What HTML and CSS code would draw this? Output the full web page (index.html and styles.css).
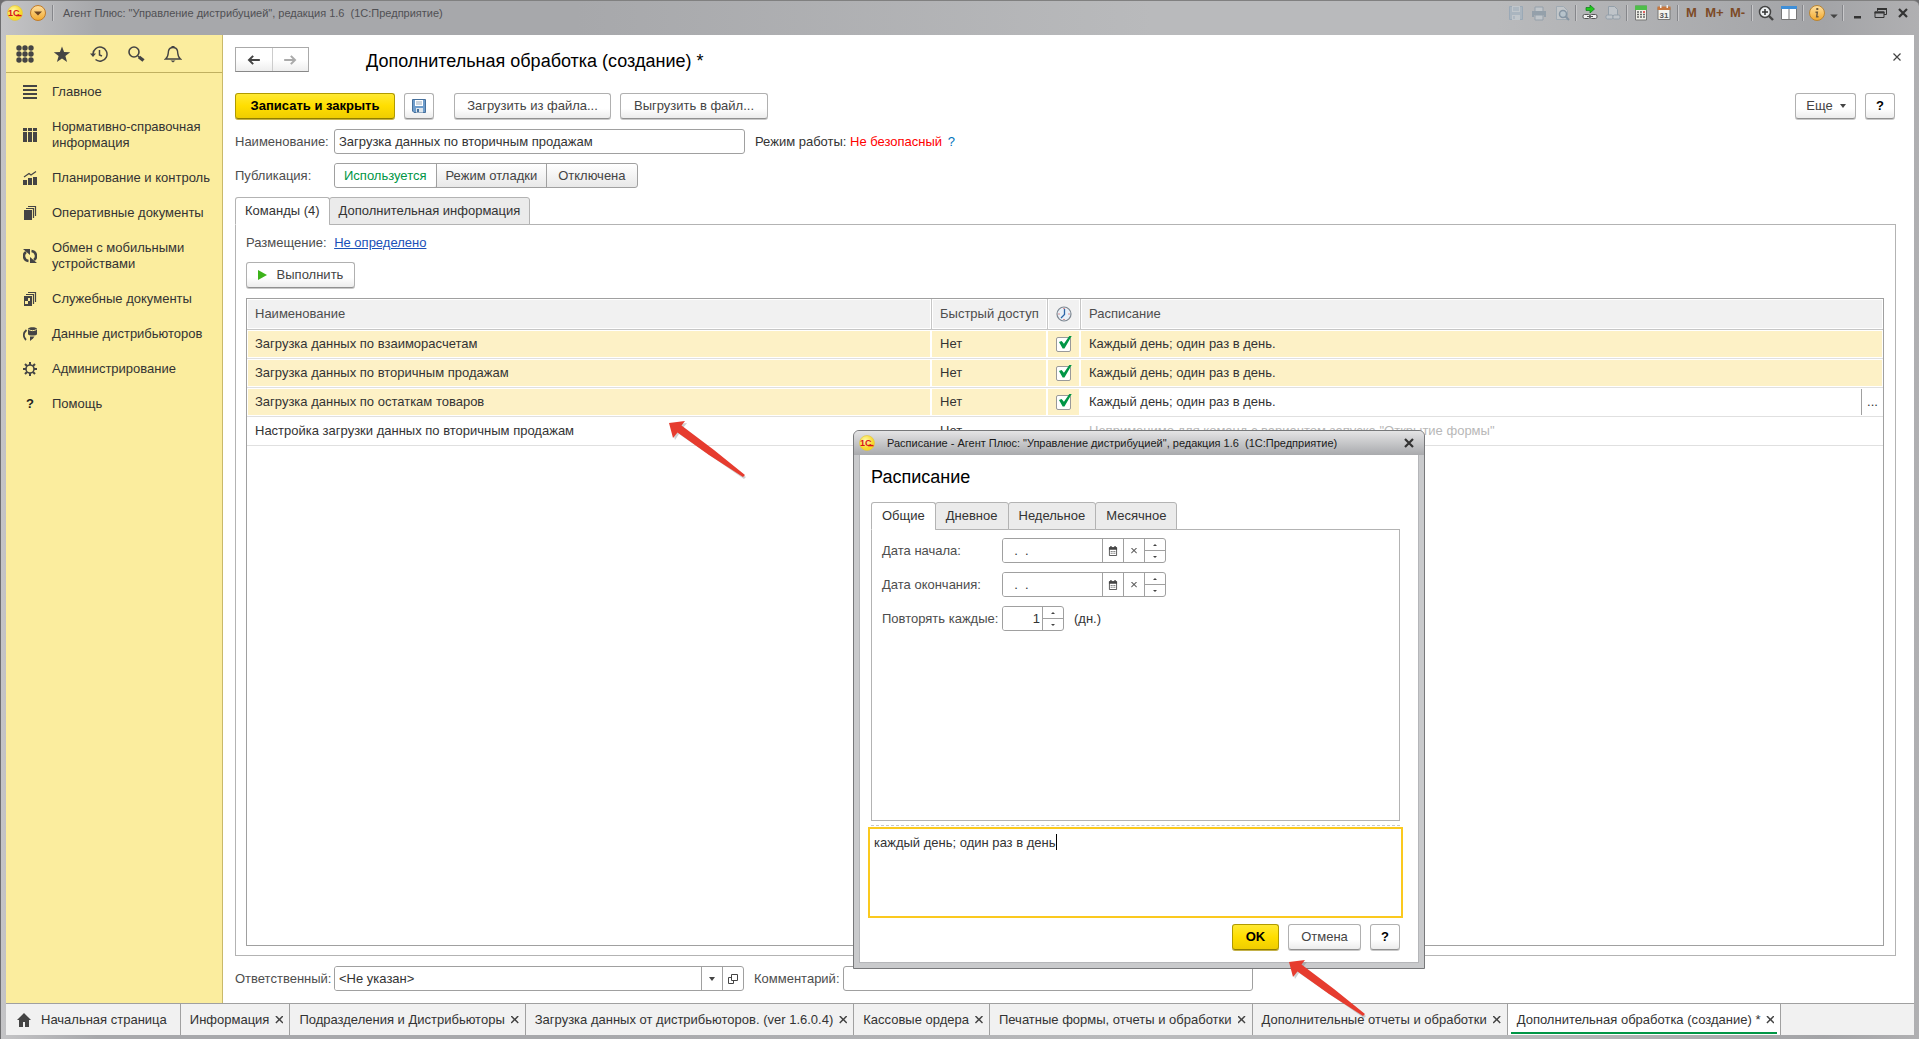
FILE: index.html
```html
<!DOCTYPE html>
<html lang="ru">
<head>
<meta charset="utf-8">
<title>Дополнительная обработка (создание) *</title>
<link rel="stylesheet" href="styles.css">
</head>
<body>
<svg class="defs" width="0" height="0" aria-hidden="true">
  <defs>
    <radialGradient id="gold" cx="40%" cy="35%"><stop offset="0" stop-color="#fffbb0"/><stop offset="1" stop-color="#f7d92c"/></radialGradient>
    <linearGradient id="amber" x2="0" y2="1"><stop offset="0" stop-color="#ffe0a0"/><stop offset="1" stop-color="#f2a92e"/></linearGradient>
  </defs>
  <symbol id="logo" viewBox="0 0 16 16"><circle cx="8" cy="8" r="7.500" fill="url(#gold)" stroke="#e3c23a" stroke-width=".6"/><text x="1" y="11.300" class="logo-text">1С</text><path d="M9 10.600h5.500" stroke="#d8141c" stroke-width="1.400"/></symbol>
  <symbol id="cal" viewBox="0 0 10 11"><path d="M1 2h8v8.500H1z" fill="none" stroke="#444"/><path d="M.5 1.500h9V4h-9zM2 0h1.500v2H2zm4.500 0H8v2H6.500zM2.500 5.500h1v1h-1zm2 0h1v1h-1zm2 0h1v1h-1zm-4 2h1v1h-1zm2 0h1v1h-1zm2 0h1v1h-1z" fill="#444"/></symbol>
  <symbol id="arrow" viewBox="0 0 82 60"><path d="M2 3 18 1 14 6 77 55 75 57 10 12 6 18z" fill="#777" opacity=".35" transform="translate(1 2)"/><path d="M1 3 17 1 13.500 5.500 46 30 77 55 75 57 41 35 9.500 12.500 5 18z" fill="#e63c2f"/></symbol>
</svg>

<div class="window">
  <header class="titlebar">
    <svg class="logo" viewBox="0 0 16 16"><use href="#logo"/></svg>
    <button class="tb main-menu" aria-label="Главное меню"><svg viewBox="0 0 16 16"><circle cx="8" cy="8" r="7.500" fill="url(#amber)" stroke="#c07a28"/><path d="M4 6.500h8L8 10.500z" fill="#6b4423"/></svg></button>
    <i class="sep"></i>
    <span class="app-name">Агент Плюс: "Управление дистрибуцией", редакция 1.6&nbsp; (1С:Предприятие)</span>
    <div class="tools">
      <button class="tb dim" aria-label="Сохранить"><svg viewBox="0 0 16 16"><path d="M1.500 1.500h13v13h-13z" fill="#a5b4c2" stroke="#8fa3b5"/><path d="M4 1h8v6H4zM4 10h8v5H4z" fill="#c5ccd2"/><path d="M5 3h6M5 5h6M6 11v3" stroke="#8fa3b5"/></svg></button>
      <button class="tb dim" aria-label="Печать"><svg viewBox="0 0 16 16"><path d="M4 2h8v5H4zM4 10h8v5H4z" fill="#c5ccd2" stroke="#8797a5"/><path d="M1 6h14v6h-2v-2H3v2H1z" fill="#8797a5"/></svg></button>
      <button class="tb dim" aria-label="Просмотр"><svg viewBox="0 0 16 16"><path d="M2.500 1.500h7l4 4v9h-11z" fill="#c8cdd1" stroke="#97a5b0"/><circle cx="9" cy="9" r="3.500" fill="#b9c9d4" stroke="#71879a" stroke-width="1.500"/><path d="m11.500 11.500 3.500 3.500" stroke="#71879a" stroke-width="2"/></svg></button>
      <i class="sep"></i>
      <button class="tb" aria-label="Получить ссылку"><svg viewBox="0 0 16 16"><path d="M4 2.500h4V0l4.500 4L8 8V5.500H4z" fill="#22c81e" stroke="#0b7a18" stroke-width=".7"/><rect x="1" y="9.500" width="7" height="4" rx="1.500" fill="#f2f2f2" stroke="#555"/><rect x="8" y="9.500" width="7" height="4" rx="1.500" fill="#f2f2f2" stroke="#555"/><path d="M5 11.500h6" stroke="#555"/></svg></button>
      <button class="tb dim" aria-label="Перейти по ссылке"><svg viewBox="0 0 16 16"><path d="M3.500 1.500h6l3 3v6h-9z" fill="#c5ccd2" stroke="#8797a5"/><rect x="1" y="10" width="7" height="4" rx="1.500" fill="#c5ccd2" stroke="#8797a5"/><rect x="8" y="10" width="7" height="4" rx="1.500" fill="#c5ccd2" stroke="#8797a5"/></svg></button>
      <i class="sep"></i>
      <button class="tb" aria-label="Калькулятор"><svg viewBox="0 0 16 16"><path d="M2.500 1h11v14h-11z" fill="#f2f2ea" stroke="#777"/><path d="M2 .5h12V5H2z" fill="#4fbe4a"/><path d="M4 7h2m1 0h2M4 9.500h2m1 0h2M4 12h2m1 0h2m1-2.500h2m-2 2.500h2" stroke="#666" stroke-width="1.400"/><path d="M10 7h2" stroke="#d33" stroke-width="1.500"/></svg></button>
      <button class="tb" aria-label="Календарь"><svg viewBox="0 0 16 16"><path d="M2 2.500h12v12H2z" fill="#f4f4f0" stroke="#777"/><path d="M1.500 1.500h13V5h-13z" fill="#c7783f"/><path d="M4 0h1.500v3H4zm6.500 0H12v3h-1.500z" fill="#eee"/><text x="8" y="13" class="cal-day">31</text></svg></button>
      <i class="sep"></i>
      <button class="tb mem">M</button><button class="tb mem">M+</button><button class="tb mem">M-</button>
      <i class="sep"></i>
      <button class="tb" aria-label="Масштаб"><svg viewBox="0 0 16 16"><circle cx="7" cy="7" r="5.500" fill="#eef1f3" stroke="#444" stroke-width="1.500"/><path d="M4 7h6M7 4v6" stroke="#333" stroke-width="1.500"/><path d="m11 11 4 4" stroke="#444" stroke-width="2.400"/></svg></button>
      <button class="tb" aria-label="Панели"><svg viewBox="0 0 16 16"><path d="M.5 1.500h15v13H.5z" fill="#fff" stroke="#777"/><path d="M0 1h16v3H0z" fill="#3f8fd8"/><path d="M8 4v10" stroke="#777"/></svg></button>
      <i class="sep"></i>
      <button class="tb" aria-label="О программе"><svg viewBox="0 0 16 16"><circle cx="8" cy="8" r="7.500" fill="url(#amber)" stroke="#b98432"/><path d="M7.300 3h2v2h-2zM6.500 6.500h2.700L8.500 11h1v1.500H6.800L7.500 8h-1z" fill="#6f5a3c"/></svg></button>
      <button class="tb small" aria-label="Еще"><svg viewBox="0 0 16 16"><path d="M3 10h10l-5 5z" fill="#444"/></svg></button>
      <i class="sep"></i>
      <button class="tb" aria-label="Свернуть"><svg viewBox="0 0 16 16"><path d="M5 11h7v2.500H5z" fill="#333"/></svg></button>
      <button class="tb" aria-label="Восстановить"><svg viewBox="0 0 16 16"><path d="M5.500 6V3.500h9v6H12M3 7h9v5.500H3z" fill="none" stroke="#333"/><path d="M5 3h10v2H5zM2.500 6.500h10v2h-10z" fill="#333"/></svg></button>
      <button class="tb" aria-label="Закрыть"><svg viewBox="0 0 16 16"><path d="m4 4 8 8m0-8-8 8" stroke="#333" stroke-width="2.200"/></svg></button>
    </div>
  </header>

  <div class="workspace">
    <nav class="sidebar">
      <div class="side-tools">
        <button aria-label="Меню"><svg viewBox="0 0 18 18"><g fill="#444"><circle cx="3" cy="3" r="2.700"/><circle cx="9" cy="3" r="2.700"/><circle cx="15" cy="3" r="2.700"/><circle cx="3" cy="9" r="2.700"/><circle cx="9" cy="9" r="2.700"/><circle cx="15" cy="9" r="2.700"/><circle cx="3" cy="15" r="2.700"/><circle cx="9" cy="15" r="2.700"/><circle cx="15" cy="15" r="2.700"/></g></svg></button>
        <button aria-label="Избранное"><svg viewBox="0 0 18 18"><path d="m9 1.500 2.100 5.600 6.100.2-4.800 3.700 1.700 5.900L9 13.500l-5.100 3.400L5.600 11 .8 7.300l6.100-.2z" fill="#444"/></svg></button>
        <button aria-label="История"><svg viewBox="0 0 18 18"><path d="M3 9a7 7 0 1 1 2.500 5.500M9.500 5v5l2.500 1" fill="none" stroke="#444" stroke-width="1.500"/><path d="M0 8.500h6L3 12z" fill="#444"/></svg></button>
        <button aria-label="Поиск"><svg viewBox="0 0 18 18"><circle cx="7" cy="7" r="5" fill="none" stroke="#444" stroke-width="1.600"/><path d="m11 11 1.500 1.500" stroke="#444" stroke-width="1.500"/><path d="m12 12 4.500 3.500" stroke="#444" stroke-width="3.400"/></svg></button>
        <button aria-label="Уведомления"><svg viewBox="0 0 18 18"><path d="M1.500 14c3-2 2.500-5 3-8C5 3.500 7 2.500 9 2.500s4 1 4.500 3.500c.5 3 0 6 3 8z" fill="none" stroke="#444" stroke-width="1.400"/><path d="M7.500 1h3v1.500h-3zM6.500 15.500h5L9 17.500z" fill="#444"/></svg></button>
      </div>
      <ul class="sections">
        <li><a href="#"><svg viewBox="0 0 14 14"><path d="M0 1h14M0 5h14M0 9h14M0 13h14" stroke="#444" stroke-width="2"/></svg><span>Главное</span></a></li>
        <li><a href="#"><svg viewBox="0 0 14 14"><path d="M0 0h4v3H0zm5 0h4v3H5zm5 0h4v3h-4zM0 4h4v10H0zm5 0h4v10H5zm5 0h4v10h-4z" fill="#444"/></svg><span>Нормативно-справочная информация</span></a></li>
        <li><a href="#"><svg viewBox="0 0 14 14"><path d="M0 9h4v5H0zm5-2h4v7H5zm5-1h4v8h-4z" fill="#444"/><path d="m1 6 5-3.500L8 4l5-3.500" fill="none" stroke="#444" stroke-width="1.200"/></svg><span>Планирование и контроль</span></a></li>
        <li><a href="#"><svg viewBox="0 0 14 14"><path d="M1 4h8v10H1z" fill="#444"/><path d="M3 2.500h7.500V12M5 .5h7.500V10" fill="none" stroke="#444" stroke-width="1.200"/></svg><span>Оперативные документы</span></a></li>
        <li><a href="#"><svg viewBox="0 0 14 14"><path d="M5.500 12A5 5 0 0 1 3 3M8.500 2a5 5 0 0 1 2.500 9" fill="none" stroke="#444" stroke-width="2.600"/><path d="M0 0h7v6zM14 14H7V8z" fill="#444"/></svg><span>Обмен с мобильными устройствами</span></a></li>
        <li><a href="#"><svg viewBox="0 0 14 14"><path d="M1 4h8v10H1z" fill="#444"/><path d="M2 9h3v3H2zm3-3h2v3H5z" fill="#fbed9e"/><path d="M3 2.500h7.500V12M5 .5h7.500V10" fill="none" stroke="#444" stroke-width="1.200"/></svg><span>Служебные документы</span></a></li>
        <li><a href="#"><svg viewBox="0 0 14 14"><path d="M5 2v5c0 2 9 2 9 0V2c0-2.500-9-2.500-9 0z" fill="#444"/><path d="M5.500 2.500c2 1.500 6 1.500 8 0" fill="none" stroke="#fbed9e"/><path d="M3.500 3C0 6 0 10 3 13" fill="none" stroke="#444" stroke-width="1.800"/><path d="M7 9.500h4.500L10 11.500 7 14z" fill="#444"/></svg><span>Данные дистрибьюторов</span></a></li>
        <li><a href="#"><svg viewBox="0 0 14 14"><circle cx="7" cy="7" r="4" fill="none" stroke="#444" stroke-width="1.600"/><path d="M7 0v3M7 11v3M0 7h3M11 7h3M2 2l2 2M10 10l2 2M2 12l2-2M10 4l2-2" stroke="#444" stroke-width="2"/></svg><span>Администрирование</span></a></li>
        <li><a href="#"><b>?</b><span>Помощь</span></a></li>
      </ul>
    </nav>

    <main class="form">
      <div class="form-head">
        <div class="history">
          <button aria-label="Назад"><svg viewBox="0 0 14 12"><path d="M6 1 1 6l5 5M1 6h13" fill="none" stroke="#444" stroke-width="2.400"/></svg></button>
          <button aria-label="Вперед"><svg viewBox="0 0 14 12"><path d="m8 1 5 5-5 5M13 6H0" fill="none" stroke="#aaa" stroke-width="2.400"/></svg></button>
        </div>
        <h1>Дополнительная обработка (создание) *</h1>
        <button class="plain close" aria-label="Закрыть"><svg viewBox="0 0 8 8"><path d="m.5.5 7 7m0-7-7 7" stroke="#444" stroke-width="1.200"/></svg></button>
      </div>

      <div class="commands">
        <button class="btn primary wide">Записать и закрыть</button>
        <button class="btn square save" aria-label="Записать"><svg viewBox="0 0 14 14"><path d="M.5.5h13v13H2l-1.500-1.500z" fill="#6f9dcb" stroke="#46709c"/><path d="M3 1h8v6H3z" fill="#fff"/><path d="M4 3h6M4 5h6" stroke="#9ab"/><path d="M4 9h7v4.500H4z" fill="#dfe6ec"/><path d="M5 10h2v3H5z" fill="#46709c"/></svg></button>
        <button class="btn load">Загрузить из файла...</button>
        <button class="btn unload">Выгрузить в файл...</button>
        <button class="btn more">Еще <i class="caret"></i></button>
        <button class="btn square help">?</button>
      </div>

      <div class="row">
        <label class="cap" for="name">Наименование:</label>
        <input id="name" class="field w-name" value="Загрузка данных по вторичным продажам">
        <span class="mode">Режим работы: <em>Не безопасный</em> <a href="#">?</a></span>
      </div>
      <div class="row">
        <span class="cap">Публикация:</span>
        <div class="segments">
          <button class="on">Используется</button><button>Режим отладки</button><button>Отключена</button>
        </div>
      </div>

      <div class="tabs">
        <button class="tab on">Команды (4)</button><button class="tab">Дополнительная информация</button>
      </div>
      <section class="panel">
        <p class="placement">Размещение: <a href="#">Не определено</a></p>
        <button class="btn run"><i class="play"></i>Выполнить</button>
        <div class="grid">
          <table>
            <colgroup><col class="c-name"><col class="c-quick"><col class="c-clock"><col></colgroup>
            <thead><tr><th>Наименование</th><th>Быстрый доступ</th><th class="mid"><svg class="clock" viewBox="0 0 16 16"><circle cx="8" cy="8" r="7" fill="#e9f0f7" stroke="#7d8791" stroke-width="1.200"/><path d="M8.500 3v5.500L5 12" fill="none" stroke="#2c65a8" stroke-width="1.300"/><path d="M8 2v1M8 13v1M2.500 8h1M12.500 8h1" stroke="#c33"/></svg></th><th>Расписание</th></tr></thead>
            <tbody>
              <tr class="sel"><td>Загрузка данных по взаиморасчетам</td><td>Нет</td><td class="mid"><input type="checkbox" checked aria-label="По расписанию"></td><td>Каждый день; один раз в день.</td></tr>
              <tr class="sel"><td>Загрузка данных по вторичным продажам</td><td>Нет</td><td class="mid"><input type="checkbox" checked aria-label="По расписанию"></td><td>Каждый день; один раз в день.</td></tr>
              <tr class="sel"><td>Загрузка данных по остаткам товаров</td><td>Нет</td><td class="mid"><input type="checkbox" checked aria-label="По расписанию"></td><td class="active"><div class="edit"><span>Каждый день; один раз в день.</span><button aria-label="Выбрать">...</button></div></td></tr>
              <tr><td>Настройка загрузки данных по вторичным продажам</td><td>Нет</td><td></td><td class="na">Неприменимо для команд с вариантом запуска "Открытие формы"</td></tr>
            </tbody>
          </table>
        </div>
      </section>

      <div class="row foot">
        <label class="cap" for="resp">Ответственный:</label>
        <div class="combo w-resp"><input id="resp" value="&lt;Не указан&gt;"><button aria-label="Список"><i class="caret"></i></button><button aria-label="Открыть"><svg viewBox="0 0 10 10"><path d="M3.500.5h6v6h-6zM3.500 3.500h-3v6h5v-3" fill="none" stroke="#444"/></svg></button></div>
        <label class="cap2" for="comm">Комментарий:</label>
        <input id="comm" class="field w-comm">
      </div>
    </main>
  </div>

  <div class="taskbar">
    <a class="task home" href="#"><svg viewBox="0 0 14 14"><path d="M7 0 0 7h2v7h4V9h2v5h4V7h2z" fill="#444"/></svg>Начальная страница</a>
    <a class="task" href="#">Информация<i class="x"></i></a>
    <a class="task" href="#">Подразделения и Дистрибьюторы<i class="x"></i></a>
    <a class="task" href="#">Загрузка данных от дистрибьюторов. (ver 1.6.0.4)<i class="x"></i></a>
    <a class="task" href="#">Кассовые ордера<i class="x"></i></a>
    <a class="task" href="#">Печатные формы, отчеты и обработки<i class="x"></i></a>
    <a class="task" href="#">Дополнительные отчеты и обработки<i class="x"></i></a>
    <a class="task on" href="#">Дополнительная обработка (создание) *<i class="x"></i></a>
  </div>
</div>

<div class="dialog" role="dialog" aria-labelledby="dlg-title">
  <div class="dlg-bar">
    <svg class="logo" viewBox="0 0 16 16"><use href="#logo"/></svg>
    <span class="app-name">Расписание - Агент Плюс: "Управление дистрибуцией", редакция 1.6&nbsp; (1С:Предприятие)</span>
    <button class="plain" aria-label="Закрыть"><svg viewBox="0 0 16 16"><path d="m4 4 8 8m0-8-8 8" stroke="#333" stroke-width="2.200"/></svg></button>
  </div>
  <div class="dlg-body">
    <h2 id="dlg-title">Расписание</h2>
    <div class="tabs">
      <button class="tab on">Общие</button><button class="tab">Дневное</button><button class="tab">Недельное</button><button class="tab">Месячное</button>
    </div>
    <div class="panel dlg-panel">
      <div class="row"><label class="cap" for="d1">Дата начала:</label>
        <div class="combo w-date"><input id="d1" value="  .  ."><button aria-label="Календарь"><svg viewBox="0 0 10 11"><use href="#cal"/></svg></button><button aria-label="Очистить"><i class="x thin"></i></button><span class="spin"><button aria-label="Больше"></button><button aria-label="Меньше"></button></span></div></div>
      <div class="row"><label class="cap" for="d2">Дата окончания:</label>
        <div class="combo w-date"><input id="d2" value="  .  ."><button aria-label="Календарь"><svg viewBox="0 0 10 11"><use href="#cal"/></svg></button><button aria-label="Очистить"><i class="x thin"></i></button><span class="spin"><button aria-label="Больше"></button><button aria-label="Меньше"></button></span></div></div>
      <div class="row"><label class="cap" for="rep">Повторять каждые:</label>
        <div class="combo w-rep"><input id="rep" class="num" value="1"><span class="spin"><button aria-label="Больше"></button><button aria-label="Меньше"></button></span></div><span class="unit">(дн.)</span></div>
    </div>
    <div class="splitter"></div>
    <div class="summary">
      <textarea aria-label="Описание расписания">каждый день; один раз в день</textarea>
      <i class="cursor"></i>
    </div>
    <div class="dlg-actions">
      <button class="btn primary ok">OK</button><button class="btn cancel">Отмена</button><button class="btn square help">?</button>
    </div>
  </div>
</div>

<svg class="pointer at-table" aria-hidden="true"><use href="#arrow"/></svg>
<svg class="pointer at-ok" aria-hidden="true"><use href="#arrow"/></svg>
</body>
</html>
```

FILE: styles.css
```css
* { box-sizing: border-box; }
body {
  margin: 0;
  background: #6e6e70;
  color: #333;
  font: 13px/16px "Liberation Sans", Arial, sans-serif;
}
button, input, textarea { font: inherit; color: inherit; }
button { margin: 0; padding: 0; border: 0; background: none; display: flex; align-items: center; justify-content: center; }
input { margin: 0; padding: 0 4px; border: 0; background: #fff; outline: 0; min-width: 0; }
h1, h2, p, ul { margin: 0; padding: 0; font-weight: normal; list-style: none; }
a { color: inherit; text-decoration: none; }
svg { display: block; flex: none; }
.defs { position: absolute; }

/* Main window frame */
.window {
  min-height: 100vh;
  display: flex;
  flex-direction: column;
  margin-left: 1px;
  padding: 0 5px 4px;
  border-top: 1px solid #808080;
  border-radius: 6px 6px 0 0;
  background: linear-gradient(90deg, #c4c4c6, #a7a8ab 5%, #a7a8ab 30%, #b9babc 60%, #b9babc 78%, #a3a4a7 95%, #b0b0b2);
}
.titlebar { display: flex; align-items: flex-start; height: 34px; padding: 4px 0 0 1px; }
.titlebar .logo { width: 16px; height: 16px; }
.logo-text { font: bold 9px "Liberation Sans", sans-serif; fill: #d8141c; }
.main-menu { margin-left: 3px; }
.tb { width: 23px; height: 16px; }
.tb svg { width: 16px; height: 16px; }
.dim { opacity: .7; }
.small { width: 12px; }
.small svg { width: 12px; height: 12px; }
.sep { width: 1px; height: 16px; background: #85868a; box-shadow: 1px 0 #c8c8ca; }
.main-menu + .sep { margin-left: 3px; }
.app-name { font-size: 11px; line-height: 16px; white-space: pre; }
.titlebar .app-name { margin-left: 10px; color: #505054; }
.tools { display: flex; margin-left: auto; }
.tools .sep { margin: 0 2px; }
.mem { font-weight: bold; color: #7c4a26; }
.cal-day { font: bold 8px "Liberation Sans", sans-serif; text-anchor: middle; fill: #555; }

.workspace { flex: 1; display: flex; min-height: 0; }

/* Section panel */
.sidebar { width: 217px; flex: none; background: #fbed9e; border-right: 1px solid #c9b96a; }
.side-tools { display: flex; height: 38px; padding: 0 10px; gap: 19px; align-items: center; border-bottom: 1px solid #c0b060; }
.side-tools button { width: 18px; height: 18px; }
.side-tools svg { width: 18px; height: 18px; }
.sections { padding-top: 1px; }
.sections a { display: grid; grid-template-columns: 14px 1fr; gap: 15px; align-items: center; min-height: 35px; padding: 10px 5px 9px 17px; }
.sections svg { width: 14px; height: 14px; }
.sections b { text-align: center; font-weight: bold; color: #222; }

/* Form */
.form { flex: 1; display: flex; flex-direction: column; min-width: 0; padding: 12px 18px 12px 12px; background: #fff; }
.form-head { display: flex; align-items: center; height: 25px; margin-bottom: 21px; }
.history { display: flex; width: 74px; height: 25px; border: 1px solid #aaa; border-bottom-color: #888; background: linear-gradient(#fff 50%, #eee); }
.history button { flex: 1; }
.history button + button { border-left: 1px solid #ccc; }
.history svg { width: 14px; height: 10px; }
h1, h2 { font-size: 18px; line-height: 22px; color: #000; }
h1 { margin-left: 57px; padding-top: 2px; }
.close { margin: 0 -9px 6px auto; width: 16px; height: 16px; }

.btn { height: 26px; padding: 0 13px; border: 1px solid #b0b0b0; border-bottom-color: #909090; border-radius: 3px; background: linear-gradient(#fff 60%, #ececec); color: #444; box-shadow: 0 1px #c8c8c8; white-space: nowrap; }
.primary { border-color: #b09a00; border-bottom-color: #8f7d00; background: linear-gradient(#ffe933, #ffde00 50%, #efcd00); color: #000; font-weight: bold; box-shadow: 0 1px #c4b24a; }
.square { width: 30px; padding: 0; }
.help { color: #000; font-weight: bold; }
.caret { border: 3px solid transparent; border-top: 4px solid #444; border-bottom: 0; }
.commands { display: flex; gap: 9px; margin-bottom: 10px; }
.wide { width: 160px; }
.save svg { width: 14px; height: 14px; }
.load { width: 157px; margin-left: 11px; }
.unload { width: 148px; }
.more { width: 61px; padding-left: 14px; margin-left: auto; gap: 7px; }
.commands .help { margin-right: 1px; }

.row { display: flex; align-items: center; height: 25px; margin-bottom: 9px; }
.cap { width: 99px; flex: none; color: #4d4d4d; white-space: nowrap; }
.field, .combo { height: 25px; border: 1px solid #a0a0a0; border-radius: 3px; background: #fff; }
.w-name { width: 411px; }
.mode { margin-left: 10px; }
.mode em { font-style: normal; color: #f00; }
.mode a { margin-left: 2px; color: #0072bc; }
.segments { display: flex; height: 25px; border: 1px solid #a0a0a0; border-radius: 3px; background: linear-gradient(#fff, #e8e8e8); }
.segments button { padding: 0 9px; color: #444; }
.segments button + button { border-left: 1px solid #a0a0a0; }
.segments button:last-child { padding: 0 11px; }
.segments .on { background: #fff; color: #009646; border-radius: 3px; }

.tabs { display: flex; position: relative; z-index: 1; margin-bottom: -1px; }
.tab { height: 28px; padding: 0 9px; border: 1px solid #b3b3b3; border-radius: 3px 3px 0 0; background: #ebebeb; white-space: nowrap; }
.tab + .tab { margin-left: -1px; }
.tab.on { background: #fff; border-bottom-color: #fff; }
.panel { border: 1px solid #b3b3b3; }
.form > .panel { flex: 1; display: flex; flex-direction: column; align-items: flex-start; padding: 10px 11px 9px 10px; }
.placement { color: #4d4d4d; margin-bottom: 11px; }
.placement a { margin-left: 4px; color: #1a50b8; text-decoration: underline; }
.run { width: 109px; gap: 10px; padding: 0; margin-bottom: 10px; }
.play { border: 5px solid transparent; border-left: 9px solid #3cb31a; border-right: 0; }

.grid { flex: 1; align-self: stretch; border: 1px solid #a0a0a0; }
table { width: 100%; table-layout: fixed; border-collapse: separate; border-spacing: 0; }
.c-name { width: 684px; }
.c-quick { width: 116px; }
.c-clock { width: 33px; }
th, td { padding: 0 8px; text-align: left; font-weight: normal; white-space: nowrap; box-shadow: inset 0 0 0 1px #fff; }
th { height: 31px; background: #f1f1f1; color: #4d4d4d; border-bottom: 1px solid #c6c6c6; }
th + th { border-left: 1px solid #c6c6c6; }
td { height: 29px; border-bottom: 1px solid #e0e0e0; }
td + td { padding-left: 9px; }
th.mid, td.mid { padding: 0; }
.mid > * { margin: 0 auto; }
.clock { width: 16px; height: 16px; }
.sel td { background: #fdf1c6; }
.sel .active { background: #fff; padding-right: 0; }
.edit { display: flex; justify-content: space-between; align-items: center; height: 26px; }
.edit button { width: 22px; height: 26px; border-left: 1px solid #a0a0a0; }
td.na { color: #b8b8b8; }
input[type="checkbox"] { appearance: none; display: block; position: relative; width: 15px; height: 15px; border: 1px solid #999; border-radius: 2px; background: #fff; }
input[type="checkbox"]::after { content: ""; position: absolute; left: 2px; top: -2px; width: 13px; height: 13px; background: #009646; clip-path: polygon(0 50%, 20% 42%, 38% 64%, 82% 0, 100% 0, 42% 100%, 28% 100%); }

.foot { margin: 10px 0 0; }
.combo { display: flex; overflow: hidden; }
.combo input { flex: 1; width: 0; white-space: pre; }
.combo > button { width: 21px; border-left: 1px solid #a0a0a0; }
.combo svg { width: 10px; height: 10px; }
.w-resp { width: 410px; }
.cap2 { margin: 0 5px 0 10px; width: 84px; color: #4d4d4d; }
.w-comm { width: 410px; }

/* Open windows */
.taskbar { display: flex; height: 32px; background: #f1f1f1; border-top: 1px solid #a0a0a0; }
.task { display: flex; align-items: center; padding: 0 6px 0 9px; gap: 6px; border-right: 1px solid #a0a0a0; white-space: nowrap; }
.home { padding: 0 13px 0 11px; gap: 10px; }
.home svg { width: 14px; height: 14px; }
.task.on { background: linear-gradient(#009646, #009646) 50% 28px / calc(100% - 6px) 2px no-repeat #fff; }
.x { width: 8px; height: 8px; background: #444; clip-path: polygon(0 12%, 12% 0, 50% 36%, 88% 0, 100% 12%, 64% 50%, 100% 88%, 88% 100%, 50% 64%, 12% 100%, 0 88%, 36% 50%); }
.thin { width: 6px; height: 6px; background: #666; }

/* Schedule window floating over the form */
.dialog { position: absolute; left: 853px; top: 430px; width: 572px; padding: 0 5px 5px; border: 1px solid #77787a; border-radius: 6px 6px 0 0; background: #c9cacc; }
.dlg-bar { display: flex; align-items: center; height: 24px; margin: 0 -5px; padding: 0 7px 0 5px; border-radius: 5px 5px 0 0; background: linear-gradient(#e4e4e5, #c6c7c9 50%, #a9aaad); color: #1a1a1a; }
.dlg-bar .logo { width: 16px; height: 16px; }
.dlg-bar .app-name { margin-left: 12px; }
.plain svg { width: 16px; height: 16px; }
.dlg-bar .plain { margin-left: auto; }
.close.plain svg { width: 8px; height: 8px; }
.dlg-body { padding: 11px 18px 12px 11px; background: #fff; border: 1px solid #b5b6b9; border-top: 0; }
h2 { margin-bottom: 14px; }
.dialog .tab { padding: 0 10px; }
.dlg-panel { height: 292px; padding: 8px 10px; }
.dlg-panel .cap { width: 120px; }
.w-date { width: 164px; }
.w-rep { width: 62px; }
.spin { display: flex; flex-direction: column; width: 21px; border-left: 1px solid #a0a0a0; }
.spin button { flex: 1; }
.spin button + button { border-top: 1px solid #a0a0a0; }
.spin button::before { content: ""; border: 2px solid transparent; border-bottom-color: #444; border-top: 0; }
.spin button + button::before { border: 2px solid transparent; border-top-color: #444; border-bottom: 0; }
.num { text-align: right; padding: 0 2px; }
.unit { margin-left: 10px; }
.splitter { margin-top: 4px; border-top: 1px dashed #c8c8c8; }
.summary { position: relative; margin: 1px -3px 6px; }
.summary textarea { display: block; width: 100%; height: 91px; padding: 6px 4px; border: 2px solid #fbc91e; outline: 0; resize: none; background: #fff; }
.cursor { position: absolute; left: 188px; top: 7px; width: 1px; height: 16px; background: #000; }
.dlg-actions { display: flex; justify-content: flex-end; gap: 9px; }
.ok { width: 47px; }
.cancel { width: 73px; }

/* Red callout arrows */
.pointer { position: absolute; width: 82px; height: 60px; }
.at-table { left: 668px; top: 420px; }
.at-ok { left: 1288px; top: 959px; }
```
